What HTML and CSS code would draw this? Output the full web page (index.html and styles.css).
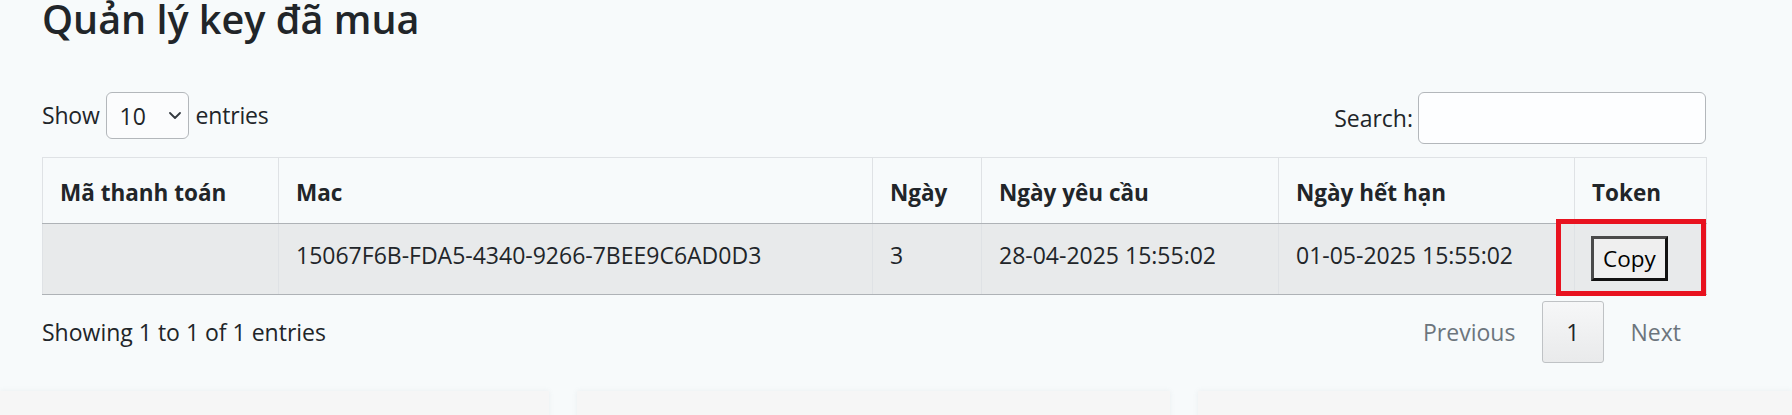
FILE: index.html
```html
<!DOCTYPE html>
<html lang="vi">
<head>
<meta charset="utf-8">
<title>Quản lý key đã mua</title>
<link rel="stylesheet" href="styles.css">
</head>
<body>
<main class="container">
  <h1 class="page-title">Quản lý key đã mua</h1>

  <div class="dt-top">
    <label class="dt-length">Show
      <span class="select-wrap">
        <select class="dt-select">
          <option>10</option>
          <option>25</option>
          <option>50</option>
          <option>100</option>
        </select>
        <svg class="chevron" viewBox="0 0 12 7" width="12" height="7" aria-hidden="true"><path d="M1 1 L6 6 L11 1" fill="none" stroke="#343a40" stroke-width="1.8" stroke-linecap="round" stroke-linejoin="round"/></svg>
      </span>
      entries</label>
    <label class="dt-search">Search:<input type="search" class="dt-input"></label>
  </div>

  <div class="table-wrap">
    <table class="dt-table">
      <colgroup>
        <col class="c1"><col class="c2"><col class="c3"><col class="c4"><col class="c5"><col class="c6">
      </colgroup>
      <thead>
        <tr>
          <th>Mã thanh toán</th>
          <th>Mac</th>
          <th>Ngày</th>
          <th>Ngày yêu cầu</th>
          <th>Ngày hết hạn</th>
          <th>Token</th>
        </tr>
      </thead>
      <tbody>
        <tr>
          <td></td>
          <td>15067F6B-FDA5-4340-9266-7BEE9C6AD0D3</td>
          <td>3</td>
          <td>28-04-2025 15:55:02</td>
          <td>01-05-2025 15:55:02</td>
          <td class="token"><button class="copy-btn" type="button">Copy</button></td>
        </tr>
      </tbody>
    </table>
    <div class="highlight-box"></div>
  </div>

  <div class="dt-bottom">
    <div class="dt-info">Showing 1 to 1 of 1 entries</div>
    <nav class="dt-paging">
      <span class="pg-btn disabled">Previous</span>
      <span class="pg-btn current">1</span>
      <span class="pg-btn disabled">Next</span>
    </nav>
  </div>
</main>

<section class="cards">
  <div class="card card-a"></div>
  <div class="card card-b"></div>
  <div class="card card-c"></div>
</section>
</body>
</html>
```

FILE: styles.css
```css
html, body {
  margin: 0;
  padding: 0;
}

body {
  background: #f7fafb;
  color: #212529;
  font-family: "Open Sans", "Noto Sans", sans-serif;
  font-size: 23px;
  line-height: 1.5;
  overflow: hidden;
}

.container {
  width: 1664px;
  margin-left: 42px;
}

.page-title {
  margin: 0;
  font-size: 39.5px;
  line-height: 39px;
  font-weight: 600;
  color: #212529;
}

.dt-top {
  margin-top: 53px;
  display: flex;
  justify-content: space-between;
  align-items: flex-start;
}

.dt-length {
  display: flex;
  align-items: center;
  height: 47px;
  letter-spacing: -0.2px;
}

.select-wrap {
  position: relative;
  display: inline-block;
  margin: 0 7px 0 6px;
  letter-spacing: 0;
}

.dt-select {
  appearance: none;
  -webkit-appearance: none;
  display: block;
  width: 83px;
  height: 47px;
  box-sizing: border-box;
  border: 1px solid #b3b7bb;
  border-radius: 6px;
  background: #fbfcfd;
  font-family: inherit;
  font-size: 23px;
  color: #212529;
  padding: 0 0 0 13px;
}

.chevron {
  position: absolute;
  right: 8px;
  top: 20px;
  pointer-events: none;
}

.dt-search {
  display: flex;
  align-items: center;
  height: 52px;
}

.dt-input {
  width: 288px;
  height: 52px;
  box-sizing: border-box;
  margin-left: 5px;
  border: 1px solid #b3b7bb;
  border-radius: 6px;
  background: #fdfeff;
}

.table-wrap {
  position: relative;
  margin-top: 13px;
}

.dt-table {
  width: 1664px;
  border-collapse: collapse;
  table-layout: fixed;
}

.c1 { width: 236px; }
.c2 { width: 594px; }
.c3 { width: 109px; }
.c4 { width: 297px; }
.c5 { width: 296px; }
.c6 { width: 132px; }

.dt-table th,
.dt-table td {
  border: 1px solid #dfe2e5;
  text-align: left;
  white-space: nowrap;
}

.dt-table th {
  padding: 18px 17px 13px;
  vertical-align: bottom;
  font-size: 22.5px;
  line-height: 33.75px;
  font-weight: 700;
  border-bottom: 1px solid #aeb2b6;
}

.dt-table td {
  padding: 14px 17px 13px;
  vertical-align: top;
  background: #e8eaeb;
  border-bottom: 1px solid #aeb2b6;
}

.dt-table td.token {
  padding: 12px 16px 13px;
}

.copy-btn {
  display: block;
  height: 45px;
  box-sizing: border-box;
  padding: 0 9px;
  font-family: inherit;
  font-size: 22.5px;
  color: #000;
  background: #efefef;
  border: 3px solid;
  border-color: #4a4a4a #111 #111 #4a4a4a;
  border-radius: 0;
}

.highlight-box {
  position: absolute;
  left: 1514px;
  top: 62px;
  width: 150px;
  height: 77px;
  box-sizing: border-box;
  border: 5px solid #e8121f;
}

.dt-bottom {
  margin-top: 6px;
  display: flex;
  justify-content: space-between;
  align-items: center;
}

.dt-paging {
  display: flex;
  align-items: center;
}

.pg-btn {
  display: inline-block;
  padding: 12px 24px;
  border: 1px solid transparent;
  border-radius: 3px;
  margin-left: 2px;
  line-height: 36px;
  color: #6c757d;
}

.pg-btn.current {
  color: #212529;
  border-color: #bfc2c5;
  background: linear-gradient(#f6f7f8, #e9eaeb);
  padding: 12px 23px;
}

.cards {
  margin-top: 28px;
  display: flex;
  gap: 28px;
}

.card {
  height: 120px;
  background: #f6f6f6;
  box-shadow: 0 0 5px rgba(120, 140, 150, 0.10);
}

.card-a { width: 549px; }
.card-b { width: 594px; }
.card-c { width: 594px; }
```
